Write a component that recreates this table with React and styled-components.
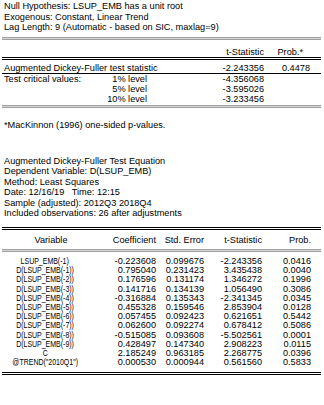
import React from 'react';
import styled, { createGlobalStyle } from 'styled-components';

const Global = createGlobalStyle`
  html, body { margin: 0; padding: 0; background: #fff; }
  body {
    font-family: "Liberation Sans", Arial, sans-serif;
    color: #000;
    -webkit-font-smoothing: antialiased;
  }
`;

const Page = styled.div`
  width: 319px;
  padding: 1px 0 0 2px;
  font-size: 9.2px;
`;

const InfoBlock = styled.div`
  padding-left: 2px;
  line-height: 10.5px;
  margin-top: ${p => p.$mt || 0}px;
`;

const InfoLine = styled.div`
  white-space: nowrap;
  height: 10.5px;
`;

const Rule = styled.div`
  box-sizing: border-box;
  height: 3px;
  border-top: 1px solid ${p => p.$line};
  border-bottom: 1px solid ${p => p.$line};
  background: ${p => p.$gap};
  margin-top: ${p => p.$mt || 0}px;
`;

const Row = styled.div`
  display: grid;
  grid-template-columns: ${p => p.$cols};
  box-sizing: content-box;
  height: ${p => p.$h || 10}px;
  padding-top: ${p => p.$pt || 0}px;
  margin-top: ${p => p.$mt || 0}px;
  line-height: ${p => p.$lh || 10}px;
  border-bottom: ${p => (p.$under ? '1px solid #000' : 'none')};
`;

const Cell = styled.div`
  white-space: nowrap;
  text-align: ${p => p.$align || 'left'};
  padding-left: ${p => p.$pl || 0}px;
  padding-right: ${p => p.$pr || 0}px;
  grid-column: ${p => p.$col || 'auto'};
`;

const VarName = styled.span`
  display: inline-block;
  transform: scaleX(0.76);
  transform-origin: 50% 50%;
`;

const Body = styled.div`
  margin-top: ${p => p.$mt || 0}px;
`;

const UP_COLS = '98px 47px 117px 46px 1fr';
const LO_COLS = '86px 68px 48px 58px 49px 1fr';

const rows = [
  ['LSUP_EMB(-1)', '-0.223608', '0.099676', '-2.243356', '0.0416'],
  ['D(LSUP_EMB(-1))', '0.795040', '0.231423', '3.435438', '0.0040'],
  ['D(LSUP_EMB(-2))', '0.176596', '0.131174', '1.346272', '0.1996'],
  ['D(LSUP_EMB(-3))', '0.141716', '0.134139', '1.056490', '0.3086'],
  ['D(LSUP_EMB(-4))', '-0.316884', '0.135343', '-2.341345', '0.0345'],
  ['D(LSUP_EMB(-5))', '0.455328', '0.159546', '2.853904', '0.0128'],
  ['D(LSUP_EMB(-6))', '0.057455', '0.092423', '0.621651', '0.5442'],
  ['D(LSUP_EMB(-7))', '0.062600', '0.092274', '0.678412', '0.5086'],
  ['D(LSUP_EMB(-8))', '-0.515085', '0.093608', '-5.502561', '0.0001'],
  ['D(LSUP_EMB(-9))', '0.428497', '0.147340', '2.908223', '0.0115'],
  ['C', '2.185249', '0.963185', '2.268775', '0.0396'],
  ['@TREND("2010Q1")', '0.000530', '0.000944', '0.561560', '0.5833'],
];

const GRAY = { line: '#a0a0a0', gap: '#d6d6d6' };
const BLACK = { line: '#000', gap: '#fff' };

export default function App() {
  return (
    <>
      <Global />
      <Page>
        <InfoBlock>
          <InfoLine>Null Hypothesis: LSUP_EMB has a unit root</InfoLine>
          <InfoLine>Exogenous: Constant, Linear Trend</InfoLine>
          <InfoLine>Lag Length: 9 (Automatic - based on SIC, maxlag=9)</InfoLine>
        </InfoBlock>

        <Rule $line={GRAY.line} $gap={GRAY.gap} $mt={4.5} />
        <Row $cols={UP_COLS} $h={10} $pt={7}>
          <Cell $col="3" $align="right">t-Statistic</Cell>
          <Cell $col="4" $align="right" $pr={7}>Prob.*</Cell>
        </Row>
        <Rule $line={BLACK.line} $gap={BLACK.gap} />

        <Row $cols={UP_COLS} $mt={3} $under>
          <Cell $col="1 / 3" $pl={2}>Augmented Dickey-Fuller test statistic</Cell>
          <Cell $col="3" $align="right">-2.243356</Cell>
          <Cell $col="4" $align="right">0.4478</Cell>
        </Row>
        <Row $cols={UP_COLS}>
          <Cell $col="1" $pl={2}>Test critical values:</Cell>
          <Cell $col="2" $align="right">1% level</Cell>
          <Cell $col="3" $align="right">-4.356068</Cell>
        </Row>
        <Row $cols={UP_COLS}>
          <Cell $col="2" $align="right">5% level</Cell>
          <Cell $col="3" $align="right">-3.595026</Cell>
        </Row>
        <Row $cols={UP_COLS}>
          <Cell $col="2" $align="right">10% level</Cell>
          <Cell $col="3" $align="right">-3.233456</Cell>
        </Row>
        <Rule $line={GRAY.line} $gap={GRAY.gap} $mt={1} />

        <InfoBlock $mt={12}>
          <InfoLine>*MacKinnon (1996) one-sided p-values.</InfoLine>
        </InfoBlock>

        <InfoBlock $mt={25}>
          <InfoLine>Augmented Dickey-Fuller Test Equation</InfoLine>
          <InfoLine>Dependent Variable: D(LSUP_EMB)</InfoLine>
          <InfoLine>Method: Least Squares</InfoLine>
          <InfoLine>Date: 12/16/19&nbsp;&nbsp; Time: 12:15</InfoLine>
          <InfoLine>Sample (adjusted): 2012Q3 2018Q4</InfoLine>
          <InfoLine>Included observations: 26 after adjustments</InfoLine>
        </InfoBlock>

        <Rule $line={BLACK.line} $gap={BLACK.gap} $mt={8.5} />
        <Row $cols={LO_COLS} $h={14} $pt={5}>
          <Cell $col="1" $align="center" $pl={12}>Variable</Cell>
          <Cell $col="2" $align="right">Coefficient</Cell>
          <Cell $col="3" $align="right">Std. Error</Cell>
          <Cell $col="4" $align="right">t-Statistic</Cell>
          <Cell $col="5" $align="right">Prob.</Cell>
        </Row>
        <Rule $line={GRAY.line} $gap={GRAY.gap} />

        <Body $mt={5}>
          {rows.map(r => (
            <Row key={r[0]} $cols={LO_COLS} $h={9.2} $lh={9.2}>
              <Cell $align="center"><VarName>{r[0]}</VarName></Cell>
              <Cell $align="right">{r[1]}</Cell>
              <Cell $align="right">{r[2]}</Cell>
              <Cell $align="right">{r[3]}</Cell>
              <Cell $align="right">{r[4]}</Cell>
            </Row>
          ))}
        </Body>
        <Rule $line={BLACK.line} $gap={BLACK.gap} $mt={5} />
      </Page>
    </>
  );
}
